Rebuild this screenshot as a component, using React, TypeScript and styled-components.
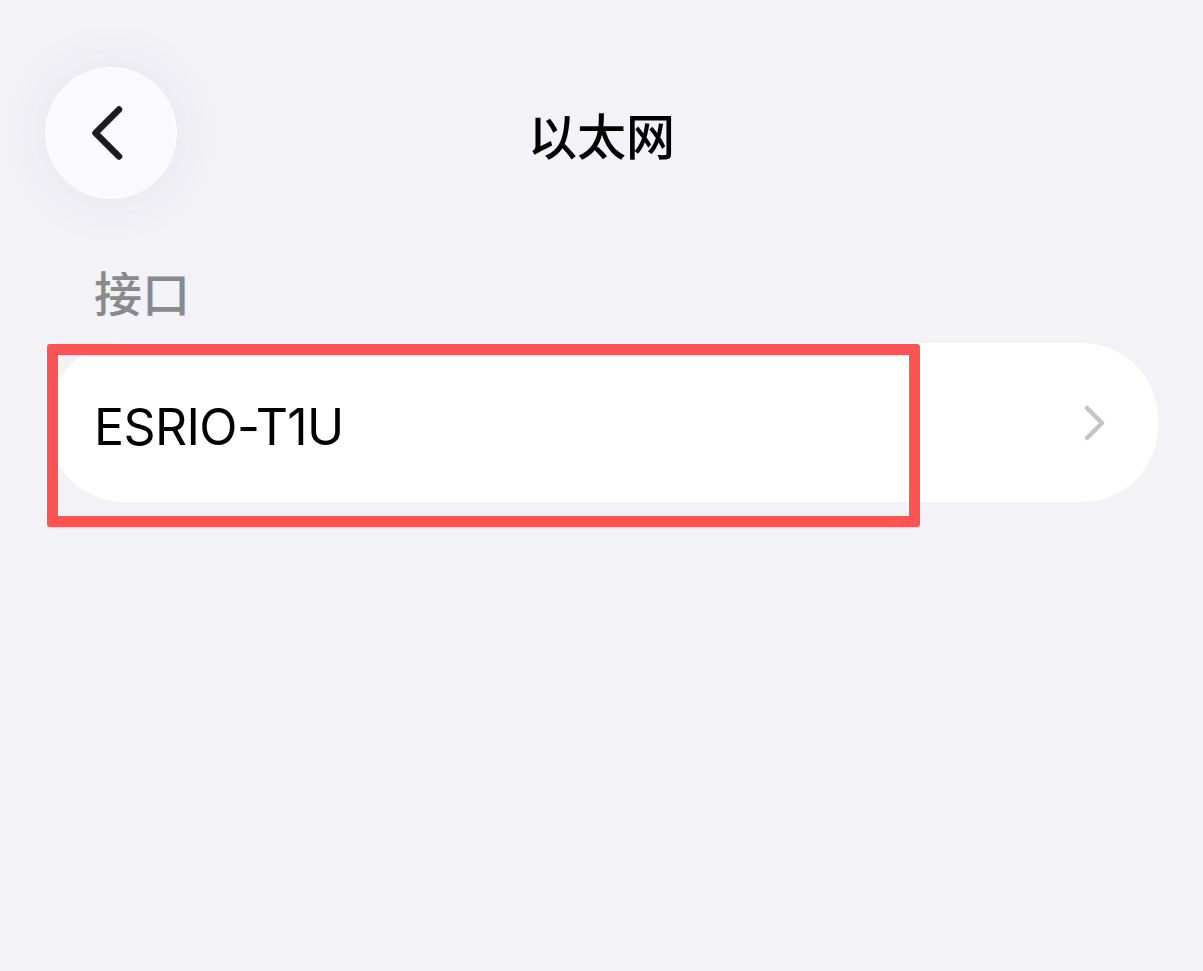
import React from "react";
import styled, { createGlobalStyle } from "styled-components";

const GlobalStyle = createGlobalStyle`
  html, body {
    margin: 0;
    padding: 0;
    background: #f2f2f7;
  }
  body {
    font-family: Inter, "Noto Sans CJK SC", sans-serif;
  }
`;

const Page = styled.div`
  width: 1203px;
  height: 971px;
  box-sizing: border-box;
  padding: 67px 45px 0 48px;
  background: #f2f2f7;
  display: flex;
  flex-direction: column;
`;

const Header = styled.header`
  display: grid;
  grid-template-columns: 132px 1fr 132px;
  align-items: center;
  height: 132px;
  margin-left: -3px;
`;

const BackButton = styled.button`
  width: 132px;
  height: 132px;
  border-radius: 50%;
  border: 1.5px solid #ffffff;
  background: #f9f9fe;
  box-shadow: 0 0 60px rgba(60, 60, 80, 0.07);
  display: flex;
  align-items: center;
  justify-content: center;
  padding: 0;
  cursor: pointer;
`;

const Title = styled.h1`
  margin: 0;
  text-align: center;
  font-family: "Noto Sans CJK SC", sans-serif;
  font-weight: 500;
  font-size: 49px;
  color: #000;
  padding-left: 0;
`;

const SectionLabel = styled.div`
  font-family: "Noto Sans CJK SC", sans-serif;
  font-weight: 500;
  font-size: 48px;
  line-height: 1;
  color: #8a8a8e;
  margin: 68px 0 0 46px;
`;

const Card = styled.div`
  position: relative;
  margin-top: 28px;
  height: 159px;
  width: 1110px;
  background: #ffffff;
  border-radius: 76px;
  display: flex;
  align-items: center;
  justify-content: space-between;
  box-sizing: border-box;
  padding: 0 50px 0 46px;
`;

const RowText = styled.span`
  font-family: Inter, sans-serif;
  font-size: 50px;
  letter-spacing: -0.6px;
  color: #000;
  margin-top: 8px;
`;

const Highlight = styled.div`
  position: absolute;
  left: -1px;
  top: 1px;
  width: 873px;
  height: 183px;
  box-sizing: border-box;
  border: 11px solid #fc5454;
  border-radius: 3px;
  pointer-events: none;
`;

export default function App() {
  return (
    <>
      <GlobalStyle />
      <Page>
        <Header>
          <BackButton aria-label="返回">
            <svg width="48" height="64" viewBox="0 0 48 64">
              <path
                d="M32 8.5 L8.5 32 L32 55.5"
                fill="none"
                stroke="#1c1c1e"
                strokeWidth="6.5"
                strokeLinecap="round"
                strokeLinejoin="round"
              />
            </svg>
          </BackButton>
          <Title>以太网</Title>
          <div />
        </Header>
        <SectionLabel>接口</SectionLabel>
        <Card>
          <RowText>ESRIO-T1U</RowText>
          <svg width="26" height="40" viewBox="0 0 26 40">
            <path
              d="M5 5 L20 20 L5 35"
              fill="none"
              stroke="#c4c4c7"
              strokeWidth="4.5"
              strokeLinecap="round"
              strokeLinejoin="round"
            />
          </svg>
          <Highlight />
        </Card>
      </Page>
    </>
  );
}
